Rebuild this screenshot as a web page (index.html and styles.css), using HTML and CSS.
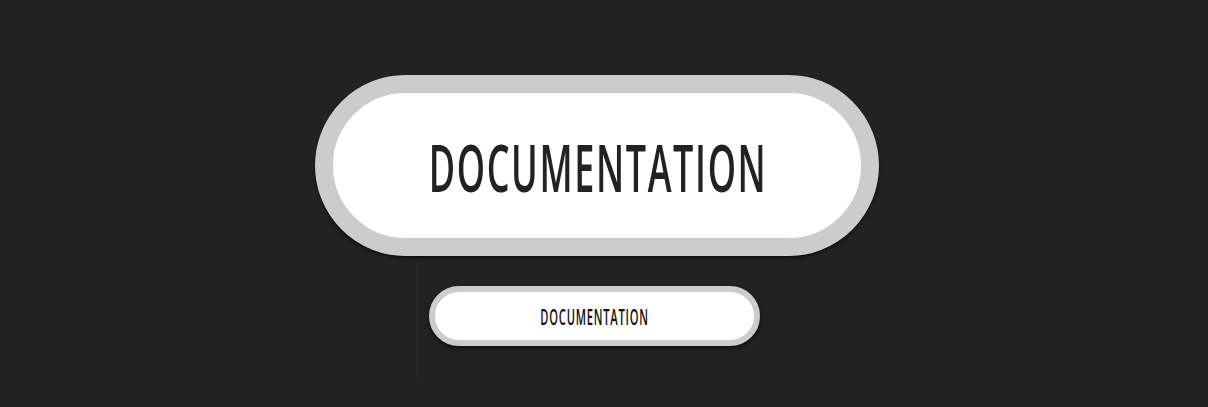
FILE: index.html
```html
<!DOCTYPE html>
<html>
<head>
<meta charset="utf-8">
<link rel="stylesheet" href="styles.css">
</head>
<body>
<main class="stage">
  <a class="btn btn-large" href="#"><span class="label">DOCUMENTATION</span></a>
  <section class="panel">
    <a class="btn btn-small" href="#"><span class="label">DOCUMENTATION</span></a>
  </section>
</main>
</body>
</html>
```
FILE: styles.css
```css
html, body {
  margin: 0;
  padding: 0;
  background: #222222;
  height: 100%;
}
.stage {
  display: flex;
  flex-direction: column;
  align-items: center;
  padding-top: 75px;
  padding-right: 14px;
}
.btn {
  display: flex;
  align-items: center;
  justify-content: center;
  box-sizing: border-box;
  background: #ffffff;
  border-style: solid;
  border-color: #cccccc;
  text-decoration: none;
  color: #222222;
  font-family: "Open Sans", "Liberation Sans", sans-serif;
  white-space: nowrap;
}
.label {
  display: inline-block;
}
.btn-large {
  width: 564px;
  height: 181px;
  border-width: 18px;
  border-radius: 91px;
  box-shadow: 0 2px 3px rgba(0, 0, 0, 0.6);
}
.btn-large .label {
  font-size: 66px;
  font-weight: 600;
  line-height: 1;
  letter-spacing: 3px;
  padding-left: 3px;
  transform: scaleX(0.545);
  margin-top: 1px;
}
.panel {
  margin-top: 6px;
  border-left: 1px solid #292929;
  padding: 24px 17px 34px 11px;
}
.btn-small {
  width: 331px;
  height: 60px;
  border-width: 6px;
  border-radius: 30px;
  box-shadow: 0 2px 4px rgba(0, 0, 0, 0.6);
  color: #111111;
}
.btn-small .label {
  font-size: 21px;
  font-weight: 600;
  line-height: 1;
  letter-spacing: 1.5px;
  padding-left: 1.5px;
  transform: scaleX(0.53);
  margin-top: 2px;
}
```
